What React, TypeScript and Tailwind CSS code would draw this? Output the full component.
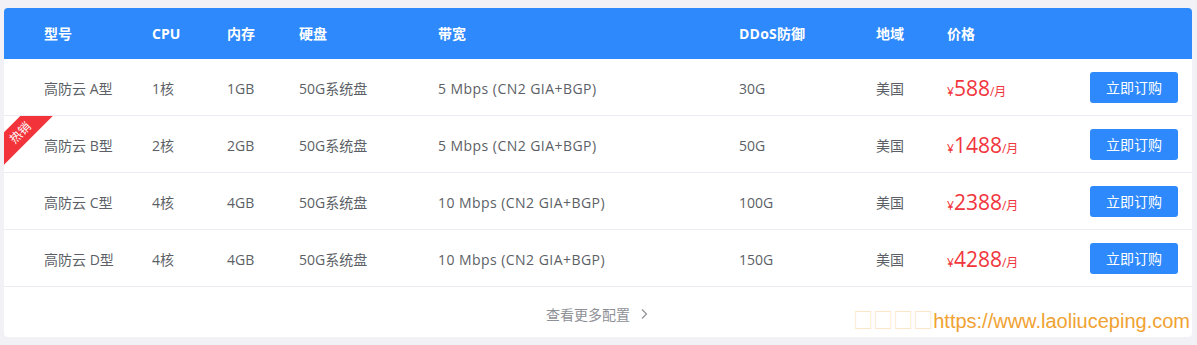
import React from 'react';

const plans = [
  { name: '高防云 A型', cpu: '1核', mem: '1GB', disk: '50G系统盘', bw: '5 Mbps (CN2 GIA+BGP)', ddos: '30G', region: '美国', price: '588', hot: false },
  { name: '高防云 B型', cpu: '2核', mem: '2GB', disk: '50G系统盘', bw: '5 Mbps (CN2 GIA+BGP)', ddos: '50G', region: '美国', price: '1488', hot: true },
  { name: '高防云 C型', cpu: '4核', mem: '4GB', disk: '50G系统盘', bw: '10 Mbps (CN2 GIA+BGP)', ddos: '100G', region: '美国', price: '2388', hot: false },
  { name: '高防云 D型', cpu: '4核', mem: '4GB', disk: '50G系统盘', bw: '10 Mbps (CN2 GIA+BGP)', ddos: '150G', region: '美国', price: '4288', hot: false },
];

const cols = 'grid grid-cols-[108px_75px_72px_139px_301px_137px_71px_143px_88px] items-center pl-[40px] pr-[14px]';

export default function App() {
  return (
    <div className="min-h-[345px] bg-[#f2f2f6] pt-[8px] pl-[4px] pr-[5px] pb-[7px] font-['Open_Sans','Noto_Sans_CJK_SC',sans-serif]">
      <div className="relative overflow-hidden rounded-[4px] bg-white">
        {/* Header */}
        <div className={`${cols} h-[51px] bg-[#2d89fc] text-[14px] font-bold text-white`}>
          <span>型号</span>
          <span>CPU</span>
          <span>内存</span>
          <span>硬盘</span>
          <span>带宽</span>
          <span className="tracking-[0.2px]">DDoS防御</span>
          <span>地域</span>
          <span>价格</span>
          <span />
        </div>

        {/* Rows */}
        {plans.map((p) => (
          <div key={p.name} className={`${cols} relative h-[57px] border-b border-[#ebedf3] text-[14px] text-[#5c5f66]`}>
            {p.hot && (
              <div className="absolute left-0 top-0 h-[56px] w-[56px] overflow-hidden">
                <div className="absolute left-[-24px] top-[5px] flex h-[23px] w-[80px] -rotate-45 items-center justify-center bg-[#f2343a] text-[12px] text-white">
                  热销
                </div>
              </div>
            )}
            <span className="pt-[2px]">{p.name}</span>
            <span className="pt-[2px]">{p.cpu}</span>
            <span className="pt-[2px]">{p.mem}</span>
            <span className="pt-[2px]">{p.disk}</span>
            <span className="pt-[2px] tracking-[0.45px]">{p.bw}</span>
            <span className="pt-[2px]">{p.ddos}</span>
            <span className="pt-[2px]">{p.region}</span>
            <span className="flex items-baseline pt-[5px] text-[#f1353d]">
              <span className="text-[12px]">¥</span>
              <span className="text-[21px] leading-none">{p.price}</span>
              <span className="text-[12px]">/月</span>
            </span>
            <button className="h-[31px] w-[88px] rounded-[3px] bg-[#2d89fc] text-[14px] text-white">立即订购</button>
          </div>
        ))}

        {/* Footer */}
        <div className="flex h-[50px] items-center justify-center gap-[10px] pt-[4px] pr-[2px] text-[14px] text-[#8e9097]">
          <span>查看更多配置</span>
          <svg width="8" height="12" viewBox="0 0 8 12" fill="none" stroke="#8e9097" strokeWidth="1.2">
            <path d="M2 1.5 L6.5 6 L2 10.5" />
          </svg>
        </div>

        <div className="absolute bottom-[6px] right-[2px] font-['Liberation_Sans',sans-serif] text-[20px] leading-none text-[#f0a232]">
          <span className="font-['Noto_Sans_CJK_SC',sans-serif] font-light text-[#fbe2c0]">□□□□</span>https://www.laoliuceping.com
        </div>
      </div>
    </div>
  );
}
